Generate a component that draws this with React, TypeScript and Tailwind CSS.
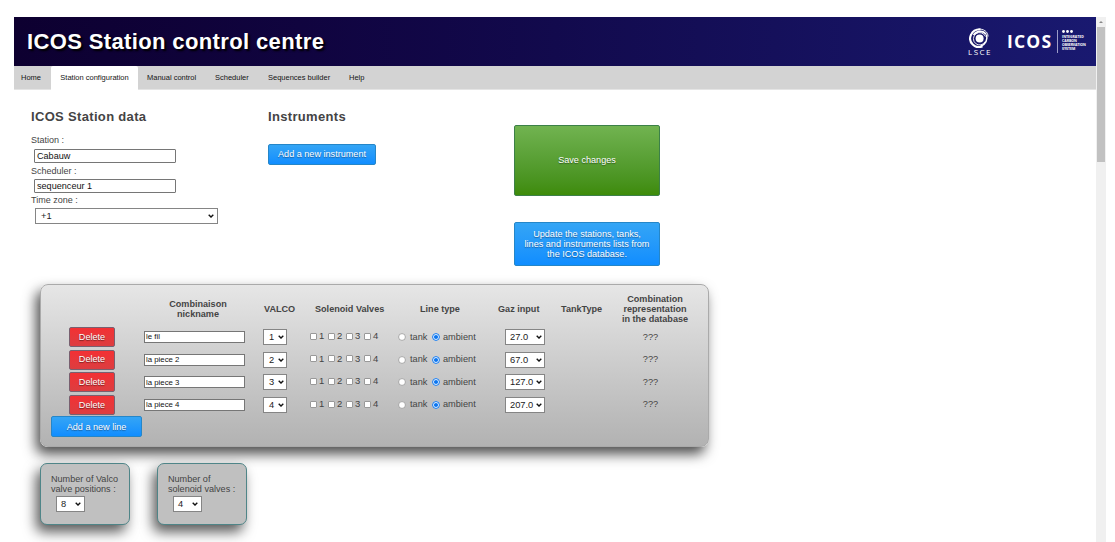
import type { ReactNode } from "react";

const rows = [
  { name: "le fil", valco: "1", gaz: "27.0" },
  { name: "la piece 2", valco: "2", gaz: "67.0" },
  { name: "la piece 3", valco: "3", gaz: "127.0" },
  { name: "la piece 4", valco: "4", gaz: "207.0" },
];

function Chevron() {
  return (
    <svg className="h-[4px] w-[6px] shrink-0" viewBox="0 0 6 4" fill="none">
      <path d="M0.7 0.8 3 3 5.3 0.8" stroke="#111" strokeWidth="1.4" />
    </svg>
  );
}

function Select({ value, className }: { value: string; className: string }) {
  return (
    <div className={`flex items-center justify-between border border-[#858585] bg-white text-[9.3px] leading-none text-[#222] ${className}`}>
      <span className="pt-px">{value}</span>
      <Chevron />
    </div>
  );
}

function BlueButton({ children, className }: { children: ReactNode; className: string }) {
  return (
    <button
      className={`flex items-center justify-center rounded-[2px] border border-[#2586c8] bg-linear-to-b from-[#34a5f5] to-[#108dff] text-center text-[9.1px] leading-[10px] text-white [text-shadow:0_1px_1px_#1b5d99] ${className}`}
    >
      {children}
    </button>
  );
}

function Radio({ checked }: { checked?: boolean }) {
  return (
    <svg className="size-[8px] shrink-0" viewBox="0 0 8 8">
      <circle cx="4" cy="4" r="3.4" fill="#fff" stroke={checked ? "#0a75f0" : "#8c8c8c"} strokeWidth={checked ? 1 : 0.7} />
      {checked && <circle cx="4" cy="4" r="2.1" fill="#0a75f0" />}
    </svg>
  );
}

function LsceLogo() {
  return (
    <div className="flex w-[26px] flex-col items-center">
      <svg className="h-[20px] w-[20px]" viewBox="0 0 20 20" fill="none" stroke="#fff">
        <circle cx="10.6" cy="10.6" r="4" fill="#fff" stroke="none" />
        <path d="M16.2 13.5A6.2 6.2 0 1 1 16.4 8.5" strokeWidth="0.9" />
        <path d="M13.5 18.2A8.6 8.6 0 0 1 2 6.8C3.6 3 7 1.2 11.5 1.3" strokeWidth="2.1" />
        <path d="M4.5 7C7.5 2.6 14 2 17.2 6.4" strokeWidth="1.6" />
        <path d="M9 1.3C14.5 0.4 19.2 3.8 19 8.6" strokeWidth="0.9" />
        <path d="M17.4 6.5C19 11.5 16.8 16.4 11.5 18.2" strokeWidth="1.5" />
      </svg>
      <span className="pl-[2px] font-['Open_Sans',sans-serif] text-[8px] leading-[8px] tracking-[1.5px]">LSCE</span>
    </div>
  );
}

function IcosLogo() {
  return (
    <div className="flex items-center">
      <span className="w-[50px] font-['Open_Sans',sans-serif] text-[17.5px] leading-none font-bold tracking-[1.2px]">ICOS</span>
      <div className="h-[23px] w-px bg-[#9c9cc8]" />
      <div className="ml-[4px] h-[23px] w-[24px] font-['Open_Sans',sans-serif] text-[3.5px] leading-[3.9px] font-bold">
        <svg className="mb-[2px] h-[3px] w-[11px]" viewBox="0 0 11 3" fill="#fff">
          <circle cx="1.5" cy="1.5" r="1.4" />
          <circle cx="5.5" cy="1.5" r="1.4" />
          <circle cx="9.5" cy="1.5" r="1.4" />
        </svg>
        <div>INTEGRATED</div>
        <div>CARBON</div>
        <div className="tracking-[-0.1px]">OBSERVATION</div>
        <div>SYSTEM</div>
      </div>
    </div>
  );
}

function CountBox({ first, second, value }: { first: string; second: string; value: string }) {
  return (
    <div className="h-[62px] w-[90px] rounded-[7px] border border-[#4f8588] bg-[#c0c0c0] pt-[10px] pl-[10px] whitespace-nowrap shadow-[-4px_7px_13px_rgba(0,0,0,0.65)]">
      <div className="text-[9.1px] leading-[10px]">{first}</div>
      <div className="text-[9.1px] leading-[10px]">{second}</div>
      <Select value={value} className="mt-[2px] ml-[5px] h-[16px] w-[29px] pr-[3px] pl-[4px]" />
    </div>
  );
}

export default function App() {
  return (
    <div className="flex h-[542px] w-[1115px] overflow-hidden bg-white pt-[17px] pl-[14px] font-['Liberation_Sans',Arial,sans-serif] text-[#444]">
      <main className="w-[1082px] shrink-0">
        <header className="flex h-[49px] items-center justify-between bg-linear-to-r from-[#0d0030] via-[#120a4d] to-[#191970] pr-[10px] pl-[13px] text-white">
          <h1 className="text-[22px] leading-none font-bold tracking-[0.37px] [text-shadow:2px_2px_2px_#000]">ICOS Station control centre</h1>
          <div className="flex items-center">
            <LsceLogo />
            <div className="ml-[15px]">
              <IcosLogo />
            </div>
          </div>
        </header>
        <nav className="flex h-[24px] items-center border-b border-[#e4e4e4] bg-[#d3d3d3] text-[7.5px] leading-none whitespace-nowrap text-[#151515]">
          <a className="w-[37px] pl-[7px]">Home</a>
          <a className="flex h-[24px] w-[87px] items-center justify-center rounded-t-[2px] bg-white">Station configuration</a>
          <a className="w-[77px] pl-[9px]">Manual control</a>
          <a className="w-[53px]">Scheduler</a>
          <a className="w-[81px]">Sequences builder</a>
          <a>Help</a>
        </nav>

        <div className="flex h-[194px] pl-[17px]">
          <section className="w-[237px] pt-[19px]">
            <h2 className="text-[13px] leading-[16px] font-bold tracking-[0.33px]">ICOS Station data</h2>
            <div className="mt-[9px] h-[15px] text-[9px] leading-[12px]">Station :</div>
            <div className="ml-[3px] flex h-[14px] w-[142px] items-center rounded-[1px] border border-[#767676] pt-px pl-[2px] text-[9.1px] leading-none text-[#111]">Cabauw</div>
            <div className="mt-[2px] h-[14px] text-[9px] leading-[12px]">Scheduler :</div>
            <div className="ml-[3px] flex h-[14px] w-[142px] items-center rounded-[1px] border border-[#767676] pt-px pl-[2px] text-[9.1px] leading-none text-[#111]">sequenceur 1</div>
            <div className="mt-[1px] h-[14px] text-[9px] leading-[12px]">Time zone :</div>
            <Select value="+1" className="ml-[4px] h-[16px] w-[183px] pr-[3px] pl-[5px]" />
          </section>
          <section className="w-[246px] pt-[19px]">
            <h2 className="text-[13px] leading-[16px] font-bold tracking-[0.33px]">Instruments</h2>
            <BlueButton className="mt-[19px] h-[21px] w-[108px] pb-px">Add a new instrument</BlueButton>
          </section>
          <section className="pt-[35px]">
            <button className="flex h-[71px] w-[146px] items-center justify-center rounded-[2px] border border-[#3c8048] bg-linear-to-b from-[#71b350] to-[#3e8b08] text-[9.1px] text-white [text-shadow:0_1px_1px_#305d20]">
              Save changes
            </button>
            <BlueButton className="mt-[26px] h-[44px] w-[146px] whitespace-nowrap">
              <span>
                Update the stations, tanks,
                <br />
                lines and instruments lists from
                <br />
                the ICOS database.
              </span>
            </BlueButton>
          </section>
        </div>

        <section className="ml-[26px] h-[163px] w-[669px] rounded-[8px] border border-[#aaa] bg-linear-to-b from-[#e6e6e6] to-[#b2b2b2] pt-[9px] pl-[10px] whitespace-nowrap shadow-[-4px_7px_13px_rgba(0,0,0,0.7)]">
          <div className="grid h-[32px] grid-cols-[93px_119px_47px_88px_99px_63px_59px_70px] items-center pb-[2px] pl-px text-[9.1px] leading-[10px] font-bold">
            <div />
            <div className="w-[106px] text-center">
              Combinaison
              <br />
              nickname
            </div>
            <div>VALCO</div>
            <div className="pl-[4px]">Solenoid Valves</div>
            <div className="pl-[21px]">Line type</div>
            <div>Gaz input</div>
            <div>TankType</div>
            <div className="text-center">
              Combination
              <br />
              representation
              <br />
              in the database
            </div>
          </div>
          {rows.map((row) => (
            <div key={row.name} className="grid h-[22.6px] grid-cols-[93px_119px_47px_88px_107px_55px_59px_70px] items-center text-[9.2px] leading-none">
              <button className="ml-[18px] h-[20px] w-[46px] rounded-[2px] border border-[#786070] bg-linear-to-b from-[#f33034] to-[#dc3d40] text-[9.1px] leading-none text-white [text-shadow:0_1px_1px_#702020]">
                Delete
              </button>
              <div className="flex h-[12px] w-[101px] items-center border border-[#767676] bg-white pl-px text-[7.8px] text-[#111]">{row.name}</div>
              <Select value={row.valco} className="h-[16px] w-[24px] pr-[2px] pl-[5px]" />
              <div className="-mt-[3px] flex text-[9.5px]">
                {["1", "2", "3", "4"].map((valve) => (
                  <div key={valve} className="flex w-[18px] items-center">
                    <span className="mt-px mr-[2px] size-[7px] rounded-[1px] border border-[#999] bg-white" />
                    {valve}
                  </div>
                ))}
              </div>
              <div className="flex items-center">
                <Radio />
                <span className="ml-[4px] w-[22px]">tank</span>
                <Radio checked />
                <span className="ml-[3px]">ambient</span>
              </div>
              <Select value={row.gaz} className="h-[16px] w-[40px] pr-[2px] pl-[4px]" />
              <div />
              <div className="pr-[7px] text-center">???</div>
            </div>
          ))}
          <BlueButton className="h-[21px] w-[91px]">Add a new line</BlueButton>
        </section>

        <div className="mt-[16px] ml-[26px] flex gap-[27px]">
          <CountBox first="Number of Valco" second="valve positions :" value="8" />
          <CountBox first="Number of" second="solenoid valves :" value="4" />
        </div>
      </main>

      <aside className="h-[525px] w-[10px] shrink-0 bg-[#f0f0f0] px-px">
        <div className="flex h-[10px] items-center justify-center">
          <svg className="h-[2px] w-[4px]" viewBox="0 0 4 2">
            <path d="M0 2 2 0l2 2z" fill="#888" />
          </svg>
        </div>
        <div className="h-[135px] bg-[#c1c1c1]" />
      </aside>
    </div>
  );
}
